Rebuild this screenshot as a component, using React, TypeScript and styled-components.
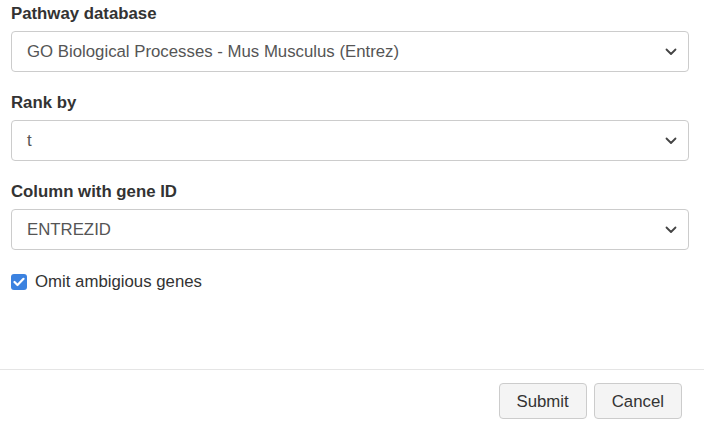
import React from "react";
import styled, { createGlobalStyle } from "styled-components";

const Global = createGlobalStyle`
  html, body { margin: 0; padding: 0; background: #fff; }
  body { font-family: "Liberation Sans", Arial, sans-serif; color: #333; }
  * { box-sizing: border-box; }
`;

const Page = styled.div`
  width: 704px;
  height: 426px;
  display: flex;
  flex-direction: column;
  overflow: hidden;
`;

const Body = styled.div`
  padding: 3px 15px 0 11px;
  display: flex;
  flex-direction: column;
  height: 369px;
`;

const Group = styled.div`
  display: flex;
  flex-direction: column;
  margin-bottom: 20px;
`;

const Label = styled.label`
  font-size: 16.8px;
  line-height: 21px;
  font-weight: bold;
  color: #333;
  margin-bottom: 7px;
`;

const SelectBox = styled.div`
  height: 41px;
  width: 678px;
  border: 1px solid #ccc;
  border-radius: 4px;
  display: flex;
  align-items: center;
  justify-content: space-between;
  padding: 0 11px 0 15px;
  font-size: 16.8px;
  color: #555;
  background: #fff;
`;

const Check = styled.div`
  display: flex;
  align-items: center;
  gap: 8px;
  font-size: 16.8px;
  line-height: 22px;
  color: #333;
  margin-top: 1px;
`;

const Box = styled.span`
  width: 16px;
  height: 16px;
  border-radius: 3px;
  background: #3b82e0;
  display: inline-flex;
  align-items: center;
  justify-content: center;
`;

const Footer = styled.div`
  border-top: 1px solid #e5e5e5;
  display: flex;
  justify-content: flex-end;
  gap: 7px;
  padding: 13px 22px 0 0;
`;

const Button = styled.button`
  height: 36px;
  padding: 1px 17px 0;
  font-family: "Liberation Sans", Arial, sans-serif;
  font-size: 16.8px;
  color: #333;
  background: #f4f4f4;
  border: 1px solid #ccc;
  border-radius: 4px;
`;

const Chevron = () => (
  <svg width="12" height="8" viewBox="0 0 12 8">
    <path d="M1.5 1.5 L6 6 L10.5 1.5" fill="none" stroke="#444" strokeWidth="1.8" strokeLinecap="round" strokeLinejoin="round" />
  </svg>
);

const Field = ({ label, value }: { label: string; value: string }) => (
  <Group>
    <Label>{label}</Label>
    <SelectBox>
      <span>{value}</span>
      <Chevron />
    </SelectBox>
  </Group>
);

export default function App() {
  return (
    <Page>
      <Global />
      <Body>
        <Field label="Pathway database" value="GO Biological Processes - Mus Musculus (Entrez)" />
        <Field label="Rank by" value="t" />
        <Field label="Column with gene ID" value="ENTREZID" />
        <Check>
          <Box>
            <svg width="12" height="10" viewBox="0 0 12 10">
              <path d="M1.5 5 L4.5 8 L10.5 1.8" fill="none" stroke="#fff" strokeWidth="2.2" strokeLinecap="round" strokeLinejoin="round" />
            </svg>
          </Box>
          <span>Omit ambigious genes</span>
        </Check>
      </Body>
      <Footer>
        <Button>Submit</Button>
        <Button>Cancel</Button>
      </Footer>
    </Page>
  );
}
